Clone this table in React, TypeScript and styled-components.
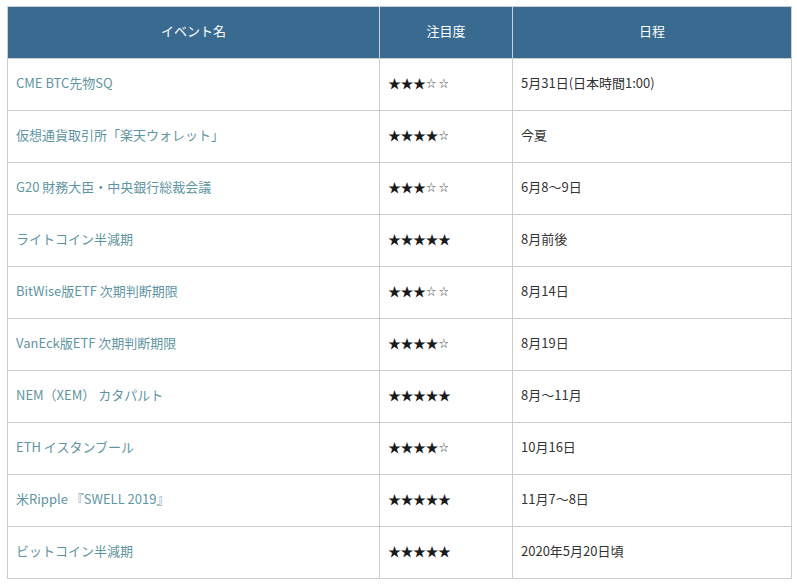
import React from 'react';
import styled, { createGlobalStyle } from 'styled-components';

interface EventRow {
  name: string;
  stars: number;
  date: string;
}

const rows: EventRow[] = [
  { name: 'CME BTC先物SQ', stars: 3, date: '5月31日(日本時間1:00)' },
  { name: '仮想通貨取引所「楽天ウォレット」', stars: 4, date: '今夏' },
  { name: 'G20 財務大臣・中央銀行総裁会議', stars: 3, date: '6月8～9日' },
  { name: 'ライトコイン半減期', stars: 5, date: '8月前後' },
  { name: 'BitWise版ETF 次期判断期限', stars: 3, date: '8月14日' },
  { name: 'VanEck版ETF 次期判断期限', stars: 4, date: '8月19日' },
  { name: 'NEM（XEM） カタパルト', stars: 5, date: '8月～11月' },
  { name: 'ETH イスタンブール', stars: 4, date: '10月16日' },
  { name: '米Ripple 『SWELL 2019』', stars: 5, date: '11月7～8日' },
  { name: 'ビットコイン半減期', stars: 5, date: '2020年5月20日頃' },
];

const GlobalStyle = createGlobalStyle`
  body {
    margin: 0;
    background: #ffffff;
    font-family: "Noto Sans CJK JP", "Noto Sans", sans-serif;
  }
`;

const Wrapper = styled.div`
  padding: 6px 7px;
`;

const Table = styled.table`
  width: 784px;
  border-collapse: collapse;
  table-layout: fixed;
  font-size: 13px;
  color: #333333;
`;

const HeadCell = styled.th<{ $width: number }>`
  box-sizing: border-box;
  width: ${({ $width }) => $width}px;
  height: 52px;
  padding: 0 8px 4px;
  background: #396a8f;
  color: #ffffff;
  font-weight: normal;
  text-align: center;
  border: 1px solid #c9cfd6;
  border-bottom-color: #cccccc;
`;

const Cell = styled.td`
  box-sizing: border-box;
  height: 52px;
  padding: 0 8px 4px;
  border: 1px solid #cccccc;
  vertical-align: middle;
  white-space: nowrap;
`;

const NameLink = styled.a`
  color: #5f95a3;
  text-decoration: none;
`;

const Stars = styled.span`
  display: inline-flex;
  align-items: center;
  gap: 1px;
`;

const Star = styled.span<{ $on: boolean }>`
  display: inline-block;
  width: 11.5px;
  text-align: center;
  color: ${({ $on }) => ($on ? '#1a1a1a' : '#555555')};
  font-size: ${({ $on }) => ($on ? '13px' : '10px')};
  line-height: 1;
`;

const Rating: React.FC<{ value: number }> = ({ value }) => (
  <Stars>
    {[0, 1, 2, 3, 4].map((i) => (
      <Star key={i} $on={i < value}>
        {i < value ? '★' : '☆'}
      </Star>
    ))}
  </Stars>
);

const App: React.FC = () => {
  return (
    <Wrapper>
      <GlobalStyle />
      <Table>
        <thead>
          <tr>
            <HeadCell $width={372}>イベント名</HeadCell>
            <HeadCell $width={133}>注目度</HeadCell>
            <HeadCell $width={279}>日程</HeadCell>
          </tr>
        </thead>
        <tbody>
          {rows.map((r) => (
            <tr key={r.name}>
              <Cell>
                <NameLink href="#">{r.name}</NameLink>
              </Cell>
              <Cell>
                <Rating value={r.stars} />
              </Cell>
              <Cell>{r.date}</Cell>
            </tr>
          ))}
        </tbody>
      </Table>
    </Wrapper>
  );
};

export default App;
